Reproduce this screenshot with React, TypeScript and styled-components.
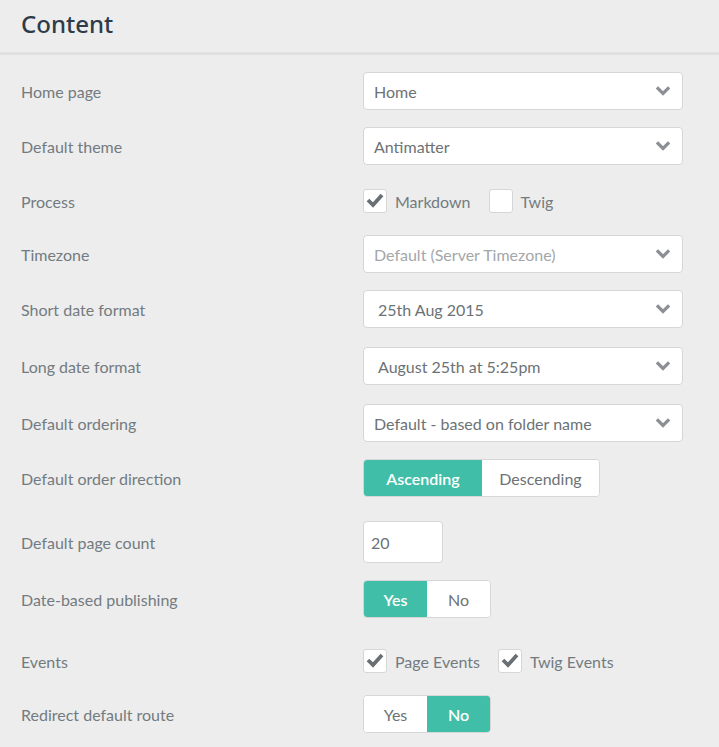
import React from "react";
import styled, { createGlobalStyle } from "styled-components";

const GlobalStyle = createGlobalStyle`
  html, body {
    margin: 0;
    padding: 0;
    background: #ededed;
  }
  body {
    font-family: Lato, "Open Sans", sans-serif;
  }
`;

const TEAL = "#41bea7";

const Chevron = () => (
  <svg width="14" height="10" viewBox="0 0 14 10">
    <polyline
      points="2,2.5 7,7.5 12,2.5"
      fill="none"
      stroke="#8c9094"
      strokeWidth="3.2"
      strokeLinecap="square"
    />
  </svg>
);

const Check = () => (
  <svg width="18" height="16" viewBox="0 0 18 16">
    <polyline
      points="2,8 7,13 16,3"
      fill="none"
      stroke="#6a6f74"
      strokeWidth="3.8"
    />
  </svg>
);

const Select = ({ value, pad, muted }: { value: string; pad?: number; muted?: boolean }) => (
  <SelectBoxS>
    <SelectTextS $pad={pad} $muted={muted}>
      {value}
    </SelectTextS>
    <Chevron />
  </SelectBoxS>
);

const Checkbox = ({ label, checked }: { label: string; checked?: boolean }) => (
  <CheckItemS>
    <CheckBoxS>{checked && <Check />}</CheckBoxS>
    <CheckLabelS>{label}</CheckLabelS>
  </CheckItemS>
);

const Toggle = ({ options, active, widths }: { options: string[]; active: number; widths: number[] }) => (
  <ToggleS>
    {options.map((o, i) => (
      <ToggleOptS key={o} $active={i === active} $w={widths[i]}>
        {o}
      </ToggleOptS>
    ))}
  </ToggleS>
);

const App = () => {
  return (
    <>
      <GlobalStyle />
      <PageS>
        <HeaderS>
          <TitleS>Content</TitleS>
        </HeaderS>
        <FormS>
          <RowS $top={17}>
            <LabelS>Home page</LabelS>
            <Select value="Home" />
          </RowS>
          <RowS $top={17}>
            <LabelS>Default theme</LabelS>
            <Select value="Antimatter" />
          </RowS>
          <RowS $top={17}>
            <LabelS>Process</LabelS>
            <ChecksS>
              <Checkbox label="Markdown" checked />
              <Checkbox label="Twig" />
            </ChecksS>
          </RowS>
          <RowS $top={15}>
            <LabelS>Timezone</LabelS>
            <Select value="Default (Server Timezone)" muted />
          </RowS>
          <RowS $top={17}>
            <LabelS>Short date format</LabelS>
            <Select value="25th Aug 2015" pad={14} />
          </RowS>
          <RowS $top={19}>
            <LabelS>Long date format</LabelS>
            <Select value="August 25th at 5:25pm" pad={14} />
          </RowS>
          <RowS $top={19}>
            <LabelS>Default ordering</LabelS>
            <Select value="Default - based on folder name" />
          </RowS>
          <RowS $top={17}>
            <LabelS>Default order direction</LabelS>
            <Toggle options={["Ascending", "Descending"]} active={0} widths={[118, 117]} />
          </RowS>
          <RowS $top={24}>
            <LabelS>Default page count</LabelS>
            <NumberInputS>20</NumberInputS>
          </RowS>
          <RowS $top={17}>
            <LabelS>Date-based publishing</LabelS>
            <Toggle options={["Yes", "No"]} active={0} widths={[63, 63]} />
          </RowS>
          <RowS $top={24}>
            <LabelS>Events</LabelS>
            <ChecksS>
              <Checkbox label="Page Events" checked />
              <Checkbox label="Twig Events" checked />
            </ChecksS>
          </RowS>
          <RowS $top={15}>
            <LabelS>Redirect default route</LabelS>
            <Toggle options={["Yes", "No"]} active={1} widths={[63, 63]} />
          </RowS>
        </FormS>
      </PageS>
    </>
  );
};

//style-----------------------------------------
const PageS = styled.div`
  width: 719px;
  min-height: 747px;
  background: #ededed;
`;
const HeaderS = styled.div`
  height: 52px;
  border-bottom: 3px solid #e0e0e0;
  display: flex;
  align-items: center;
  padding-left: 21px;
`;
const TitleS = styled.h1`
  margin: 0;
  font-family: "Noto Sans", "Open Sans", sans-serif;
  font-weight: 500;
  font-size: 24px;
  color: #2e3b49;
  position: relative;
  top: -3px;
`;
const FormS = styled.div`
  display: flex;
  flex-direction: column;
  padding: 0 36px 0 21px;
`;
const RowS = styled.div<{ $top: number }>`
  display: grid;
  grid-template-columns: 342px 320px;
  align-items: center;
  min-height: 38px;
  margin-top: ${(p) => p.$top}px;
`;
const LabelS = styled.div`
  font-size: 16px;
  color: #737b80;
`;
const SelectBoxS = styled.div`
  box-sizing: border-box;
  height: 38px;
  background: #fff;
  border: 1px solid #d6d6d6;
  border-radius: 4px;
  display: flex;
  align-items: center;
  justify-content: space-between;
  padding-right: 12px;
`;
const SelectTextS = styled.span<{ $pad?: number; $muted?: boolean }>`
  padding-left: ${(p) => p.$pad ?? 10}px;
  font-size: 16px;
  color: ${(p) => (p.$muted ? "#a3a7aa" : "#6c7276")};
`;
const ChecksS = styled.div`
  display: flex;
  align-items: center;
  gap: 18px;
`;
const CheckItemS = styled.div`
  display: flex;
  align-items: center;
  gap: 8px;
`;
const CheckBoxS = styled.div`
  box-sizing: border-box;
  width: 24px;
  height: 24px;
  background: #fff;
  border: 1px solid #d6d6d6;
  border-radius: 3px;
  display: flex;
  align-items: center;
  justify-content: center;
  padding-bottom: 2px;
`;
const CheckLabelS = styled.span`
  font-size: 16px;
  color: #737b80;
`;
const ToggleS = styled.div`
  display: flex;
  justify-self: start;
  height: 38px;
  box-sizing: border-box;
  border: 1px solid #d6d6d6;
  border-radius: 4px;
  overflow: hidden;
  background: #fff;
`;
const ToggleOptS = styled.div<{ $active: boolean; $w: number }>`
  width: ${(p) => p.$w}px;
  display: flex;
  align-items: center;
  justify-content: center;
  font-size: 16px;
  background: ${(p) => (p.$active ? TEAL : "#fff")};
  color: ${(p) => (p.$active ? "#fff" : "#6c7276")};
  font-weight: ${(p) => (p.$active ? 600 : 400)};
`;
const NumberInputS = styled.div`
  box-sizing: border-box;
  width: 80px;
  height: 42px;
  background: #fff;
  border: 1px solid #d6d6d6;
  border-radius: 4px;
  display: flex;
  align-items: center;
  padding-left: 7px;
  font-size: 16px;
  color: #6c7276;
`;

export default App;
